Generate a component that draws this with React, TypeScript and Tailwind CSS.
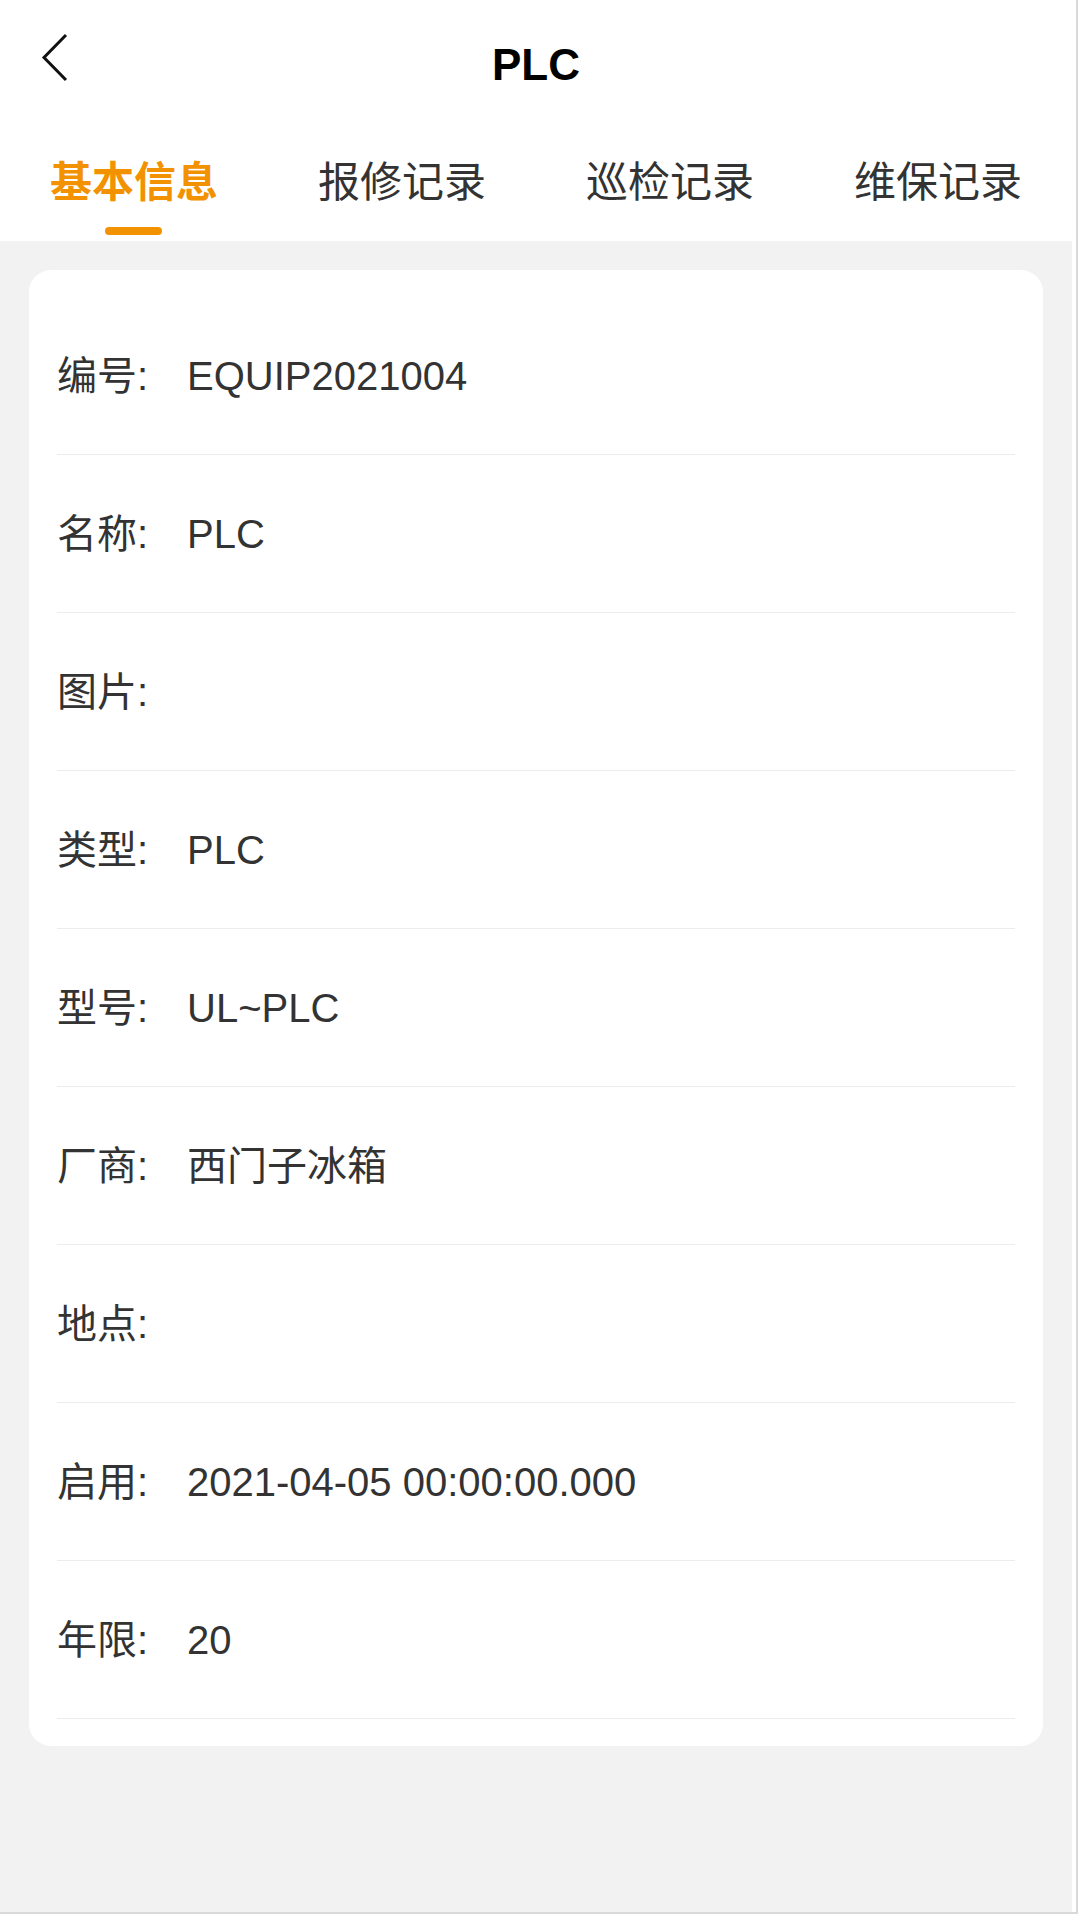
const rows = [
  { label: '编号:', value: 'EQUIP2021004' },
  { label: '名称:', value: 'PLC' },
  { label: '图片:', value: '' },
  { label: '类型:', value: 'PLC' },
  { label: '型号:', value: 'UL~PLC' },
  { label: '厂商:', value: '西门子冰箱' },
  { label: '地点:', value: '' },
  { label: '启用:', value: '2021-04-05 00:00:00.000' },
  { label: '年限:', value: '20' },
];

const tabs = ['基本信息', '报修记录', '巡检记录', '维保记录'];

export default function App() {
  return (
    <div
      className="w-[1080px] h-[1920px] bg-white"
      style={{ fontFamily: '"Liberation Sans", "Noto Sans CJK SC", sans-serif' }}
    >
      <div className="w-[1078px] h-[1914px] border-r-2 border-b-2 border-[#d9d9d9] bg-white pr-[4px]">
        <div className="w-[1072px] h-full flex flex-col">
          {/* Nav bar */}
          <div className="h-[130px] grid grid-cols-[140px_1fr_140px] bg-white">
            <div className="pl-[41px] pt-[33px]">
              <svg width="27" height="49" viewBox="0 0 27 49" fill="none">
                <path d="M25 2 L3 24.5 L25 47" stroke="#111" strokeWidth="3" />
              </svg>
            </div>
            <div className="flex items-center justify-center">
              <span className="text-[44px] font-bold text-black leading-none">PLC</span>
            </div>
            <div />
          </div>

          {/* Tabs */}
          <div className="h-[111px] flex justify-around bg-white">
            {tabs.map((t, i) => (
              <div key={t} className="flex flex-col items-center pt-[29px]">
                <span
                  className={
                    i === 0
                      ? 'text-[42px] leading-[48px] font-bold text-[#f39200]'
                      : 'text-[42px] leading-[48px] text-[#333333]'
                  }
                >
                  {t}
                </span>
                <div
                  className={
                    i === 0
                      ? 'mt-[20px] w-[57px] h-[8px] rounded-full bg-[#f39200]'
                      : 'mt-[20px] w-[57px] h-[8px]'
                  }
                />
              </div>
            ))}
          </div>

          {/* Content */}
          <div className="flex-1 bg-[#f2f2f2] px-[29px] pt-[29px]">
            <div className="bg-white rounded-[22px] px-[28px] pt-[27px] pb-[27px]">
              {rows.map((r) => (
                <div
                  key={r.label}
                  className="h-[158px] flex items-center border-b border-[#ececec] text-[40px] text-[#333333]"
                >
                  <span className="w-[130px] shrink-0">{r.label}</span>
                  <span>{r.value}</span>
                </div>
              ))}
            </div>
          </div>
        </div>
      </div>
    </div>
  );
}
